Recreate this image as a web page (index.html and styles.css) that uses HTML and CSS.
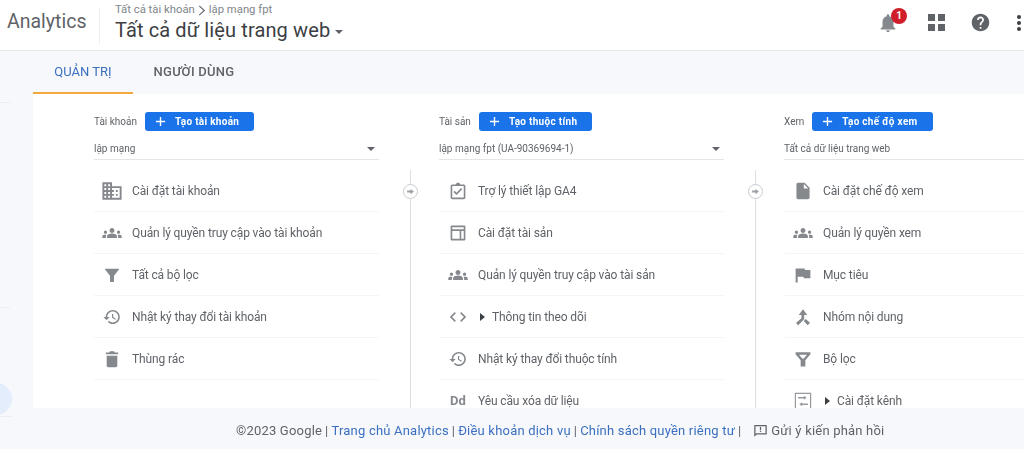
FILE: index.html
```html
<!DOCTYPE html>
<html lang="vi">
<head>
<meta charset="utf-8">
<title>Analytics</title>
<link rel="stylesheet" href="styles.css">
</head>
<body>
<svg class="defs" width="0" height="0" aria-hidden="true">
  <symbol id="i-domain" viewBox="0 0 24 24"><path fill-rule="evenodd" d="M12 7V3H2v18h20V7H12zM6 19H4v-2h2v2zm0-4H4v-2h2v2zm0-4H4V9h2v2zm0-4H4V5h2v2zm4 12H8v-2h2v2zm0-4H8v-2h2v2zm0-4H8V9h2v2zm0-4H8V5h2v2zm10 12h-8v-2h2v-2h-2v-2h2v-2h-2V9h8v10zm-2-8h-2v2h2v-2zm0 4h-2v2h2v-2z"/></symbol>
  <symbol id="i-groups" viewBox="0 0 24 24"><path d="M12 12.750c1.630 0 3.070.39 4.240.9 1.080.48 1.760 1.560 1.760 2.730V18H6v-1.610c0-1.180.68-2.260 1.760-2.730 1.170-.52 2.610-.91 4.240-.91zM4 13c1.100 0 2-.9 2-2s-.9-2-2-2-2 .9-2 2 .9 2 2 2zm1.130 1.100c-.37-.06-.74-.1-1.130-.1-.99 0-1.930.21-2.780.58C.48 14.900 0 15.620 0 16.430V18h4.500v-1.610c0-.83.23-1.610.63-2.290zM20 13c1.100 0 2-.9 2-2s-.9-2-2-2-2 .9-2 2 .9 2 2 2zm4 3.430c0-.81-.48-1.530-1.220-1.850-.85-.37-1.790-.58-2.780-.58-.39 0-.76.04-1.130.1.4.68.63 1.460.63 2.290V18H24v-1.570zM12 6c1.660 0 3 1.340 3 3s-1.340 3-3 3-3-1.340-3-3 1.340-3 3-3z"/></symbol>
  <symbol id="i-filter" viewBox="0 0 24 24"><path d="M3.800 4h16.400c.6 0 .9.7.5 1.200L14.500 13v7.200c0 .5-.4.8-.8.8h-3.400c-.4 0-.8-.3-.8-.8V13L3.300 5.200C2.900 4.700 3.200 4 3.800 4z"/></symbol>
  <symbol id="i-filter-o" viewBox="0 0 24 24"><path fill-rule="evenodd" d="M2.500 3.500h19v2.500L15 13.500v8H9v-8L2.500 6V3.500zm4.500 3 4 5h2l4-5H7z"/></symbol>
  <symbol id="i-history" viewBox="0 0 24 24"><path d="M13 3c-4.970 0-9 4.030-9 9H1l3.890 3.890.07.14L9 12H6c0-3.870 3.130-7 7-7s7 3.130 7 7-3.130 7-7 7c-1.930 0-3.680-.79-4.940-2.060l-1.420 1.420C8.270 19.990 10.510 21 13 21c4.970 0 9-4.030 9-9s-4.030-9-9-9zm-1 5v5l4.280 2.540.72-1.210-3.500-2.080V8H12z"/></symbol>
  <symbol id="i-delete" viewBox="0 0 24 24"><path d="M5.500 8h13v12c0 1.100-.9 2-2 2h-9c-1.100 0-2-.9-2-2V8zM19.500 4H15.500l-1-1.500h-5l-1 1.500H4.500v2.300h15V4z"/></symbol>
  <symbol id="i-check" viewBox="0 0 24 24"><path d="M19 4h-4.200C14.400 2.800 13.300 2 12 2s-2.400.8-2.800 2H5c-1.100 0-2 .9-2 2v14c0 1.100.9 2 2 2h14c1.100 0 2-.9 2-2V6c0-1.100-.9-2-2-2zm0 16H5V6h14v14zm-8.800-3.200-3.700-3.700 1.400-1.400 2.300 2.300 5.600-5.600 1.400 1.400-7 7z"/></symbol>
  <symbol id="i-panel" viewBox="0 0 24 24"><path fill-rule="evenodd" d="M4 3h16c.6 0 1 .4 1 1v16c0 .6-.4 1-1 1H4c-.6 0-1-.4-1-1V4c0-.6.4-1 1-1zm1 2v2.500h14V5H5zm0 4.500V19h9V9.500H5zm11 0V19h3V9.500h-3z"/></symbol>
  <symbol id="i-code" viewBox="0 0 24 24"><path d="M9.400 16.600 4.800 12l4.600-4.600L8 6l-6 6 6 6 1.400-1.400zm5.200 0 4.600-4.600-4.600-4.600L16 6l6 6-6 6-1.400-1.400z"/></symbol>
  <symbol id="i-file" viewBox="0 0 24 24"><path d="M6 2c-1.100 0-1.990.9-1.990 2L4 20c0 1.100.89 2 1.990 2H18c1.100 0 2-.9 2-2V8l-6-6H6zm7 7V3.500L18.500 9H13z"/></symbol>
  <symbol id="i-flag" viewBox="0 0 24 24"><path d="M14.400 6 14 4H3v17h2.500v-7h7.100l.4 2h8V6z"/></symbol>
  <symbol id="i-merge" viewBox="0 0 24 24"><path d="M18 22.500 21 19.500 15.500 14.500 13 17.200 18 22.500zM6.500 9.500h3.500v4L3 19.800 5.800 22.500 13.500 15V9.500H17.500L12 2 6.500 9.500z"/></symbol>
  <symbol id="i-tune" viewBox="0 0 24 24"><path fill-rule="evenodd" d="M2.500 2h19c.3 0 .5.2.5.5v19c0 .3-.2.5-.5.5h-19c-.3 0-.5-.2-.5-.5v-19c0-.3.2-.5.5-.5zM3.500 3.500v17h17v-17h-17zM6 7h7V5.500L16.500 8 13 10.500V9H6V7zm12 8h-7v-1.500L7.500 16l3.500 2.500V17h7v-2z"/></symbol>
  <symbol id="i-plus" viewBox="0 0 24 24"><path d="M10.500 2h3v8.500H22v3h-8.500V22h-3v-8.500H2v-3h8.500z"/></symbol>
  <symbol id="i-arrow" viewBox="0 0 24 24"><path d="M12 5v4.500H3v5h9V19l9-7z"/></symbol>
  <symbol id="i-bell" viewBox="0 0 24 24"><path d="M12 22c1.100 0 2-.9 2-2h-4c0 1.100.89 2 2 2zm6-6v-5c0-3.070-1.640-5.640-4.500-6.320V4c0-.83-.67-1.500-1.500-1.500s-1.500.67-1.500 1.500v.68C7.630 5.360 6 7.920 6 11v5l-2 2v1h16v-1l-2-2z"/></symbol>
  <symbol id="i-help" viewBox="0 0 24 24"><path d="M12 2C6.480 2 2 6.480 2 12s4.480 10 10 10 10-4.480 10-10S17.520 2 12 2zm1 17h-2v-2h2v2zm2.070-7.750-.9.92C13.450 12.900 13 13.500 13 15h-2v-.5c0-1.100.45-2.100 1.170-2.830l1.240-1.260c.37-.36.59-.86.59-1.410 0-1.100-.9-2-2-2s-2 .9-2 2H8c0-2.210 1.790-4 4-4s4 1.790 4 4c0 .88-.36 1.680-.93 2.250z"/></symbol>
  <symbol id="i-feedback" viewBox="0 0 24 24"><path d="M21 3H3c-.6 0-1 .4-1 1v18l4-3.500h15c.6 0 1-.4 1-1V4c0-.6-.4-1-1-1zm-1 13.500H5.300L4 17.700V5h16v11.500zM11 12.500h2v2h-2v-2zm0-6h2v4.500h-2V6.500z"/></symbol>
</svg>

<header class="topbar">
  <div class="brand">Analytics</div>
  <div class="crumbs">
    <div class="crumb-line">Tất cả tài khoản<svg class="crumb-sep" viewBox="0 0 8 12"><path d="M1 1l5.500 5L1 11"/></svg>lập mạng fpt</div>
    <div class="view-title">Tất cả dữ liệu trang web<span class="title-caret"></span></div>
  </div>
  <div class="top-actions">
    <span class="bell">
      <svg class="top-icon bell-icon"><use href="#i-bell"/></svg>
      <span class="badge">1</span>
    </span>
    <span class="apps"><i></i><i></i><i></i><i></i></span>
    <svg class="top-icon help-icon"><use href="#i-help"/></svg>
    <span class="more"><i></i><i></i><i></i></span>
  </div>
</header>

<div class="shell">
  <aside class="rail">
    <div class="rail-a"></div>
    <div class="rail-b"></div>
    <div class="rail-c"><span class="rail-dot"></span></div>
  </aside>
  <div class="workspace">
    <nav class="tabs">
      <a class="tab tab-active">QUẢN TRỊ</a>
      <a class="tab">NGƯỜI DÙNG</a>
    </nav>
    <main class="panel">
      <section class="col">
        <div class="col-head"><span class="col-label">Tài khoản</span><button class="create"><svg class="plus"><use href="#i-plus"/></svg>Tạo tài khoản</button></div>
        <div class="picker">lập mạng<span class="picker-caret"></span></div>
        <ul class="list">
          <li class="row"><svg class="ico ico-lg"><use href="#i-domain"/></svg>Cài đặt tài khoản</li>
          <li class="row"><svg class="ico ico-md"><use href="#i-groups"/></svg>Quản lý quyền truy cập vào tài khoản</li>
          <li class="row"><svg class="ico ico-sm"><use href="#i-filter"/></svg>Tất cả bộ lọc</li>
          <li class="row"><svg class="ico ico-sm"><use href="#i-history"/></svg>Nhật ký thay đổi tài khoản</li>
          <li class="row"><svg class="ico ico-md"><use href="#i-delete"/></svg>Thùng rác</li>
        </ul>
      </section>
      <section class="col">
        <div class="col-head"><span class="col-label">Tài sản</span><button class="create"><svg class="plus"><use href="#i-plus"/></svg>Tạo thuộc tính</button></div>
        <div class="picker">lập mạng fpt (UA-90369694-1)<span class="picker-caret"></span></div>
        <ul class="list list-linked">
          <li class="link-dot"><svg class="link-arrow"><use href="#i-arrow"/></svg></li>
          <li class="row"><svg class="ico ico-md"><use href="#i-check"/></svg>Trợ lý thiết lập GA4</li>
          <li class="row"><svg class="ico ico-md"><use href="#i-panel"/></svg>Cài đặt tài sản</li>
          <li class="row"><svg class="ico ico-md"><use href="#i-groups"/></svg>Quản lý quyền truy cập vào tài sản</li>
          <li class="row"><svg class="ico ico-md"><use href="#i-code"/></svg><span class="expand"></span>Thông tin theo dõi</li>
          <li class="row"><svg class="ico ico-sm"><use href="#i-history"/></svg>Nhật ký thay đổi thuộc tính</li>
          <li class="row"><span class="ico ico-text">Dd</span>Yêu cầu xóa dữ liệu</li>
        </ul>
      </section>
      <section class="col">
        <div class="col-head"><span class="col-label">Xem</span><button class="create"><svg class="plus"><use href="#i-plus"/></svg>Tạo chế độ xem</button></div>
        <div class="picker">Tất cả dữ liệu trang web<span class="picker-caret"></span></div>
        <ul class="list list-linked">
          <li class="link-dot"><svg class="link-arrow"><use href="#i-arrow"/></svg></li>
          <li class="row"><svg class="ico ico-md"><use href="#i-file"/></svg>Cài đặt chế độ xem</li>
          <li class="row"><svg class="ico ico-md"><use href="#i-groups"/></svg>Quản lý quyền xem</li>
          <li class="row"><svg class="ico ico-md"><use href="#i-flag"/></svg>Mục tiêu</li>
          <li class="row"><svg class="ico ico-sm"><use href="#i-merge"/></svg>Nhóm nội dung</li>
          <li class="row"><svg class="ico ico-sm"><use href="#i-filter-o"/></svg>Bộ lọc</li>
          <li class="row"><svg class="ico ico-md ico-thin"><use href="#i-tune"/></svg><span class="expand"></span>Cài đặt kênh</li>
        </ul>
      </section>
    </main>
    <footer class="foot">
      <span>©2023 Google</span><span class="bar">|</span><a class="foot-link">Trang chủ Analytics</a><span class="bar">|</span><a class="foot-link">Điều khoản dịch vụ</a><span class="bar">|</span><a class="foot-link">Chính sách quyền riêng tư</a><span class="bar">|</span>
      <svg class="feedback-icon"><use href="#i-feedback"/></svg><span class="feedback">Gửi ý kiến phản hồi</span>
    </footer>
  </div>
</div>
</body>
</html>
```
FILE: styles.css
```css
* { box-sizing: border-box; }
html, body { margin: 0; height: 100%; overflow: hidden; }
body {
  width: 1024px; height: 449px;
  display: flex; flex-direction: column;
  font-family: Roboto, "Liberation Sans", sans-serif;
  background: #f6f8fb; color: #5f6368;
  filter: blur(.35px);
}
.defs { position: absolute; }

.topbar {
  flex: 0 0 51px; display: flex; align-items: flex-start;
  background: #fff; border-bottom: 1px solid #e6e8eb;
}
.brand {
  width: 100px; height: 36px; margin-top: 8px; padding: 1px 0 0 7px;
  border-right: 1px solid #eceef0;
  font-size: 19.5px; line-height: 26px; color: #5f6368;
}
.crumbs { margin-left: 15px; }
.crumb-line { display: flex; align-items: center; margin-top: 3px; font-size: 11.3px; line-height: 14px; color: #80868b; }
.crumb-sep { width: 8px; height: 11px; margin: 0 3px; fill: none; stroke: #5f6368; stroke-width: 1.2; }
.view-title { font-size: 20px; line-height: 26px; color: #3c4043; letter-spacing: .12px; }
.title-caret {
  display: inline-block; margin-left: 5px; vertical-align: 3px;
  border: 4px solid transparent; border-top: 4px solid #5f6368; border-bottom: 0;
}
.top-actions { margin-left: auto; height: 45px; display: flex; align-items: center; }
.bell { position: relative; width: 22px; height: 22px; }
.top-icon { display: block; fill: #5f6368; }
.bell-icon { width: 22px; height: 22px; fill: #85898e; }
.badge {
  position: absolute; left: 14px; top: -4px; width: 16px; height: 16px; border-radius: 50%;
  background: #d01f2a; color: #fff; font-size: 10px; font-weight: 700; line-height: 16px; text-align: center;
}
.apps {
  margin-left: 29px; width: 17px; height: 17px;
  display: grid; grid-template-columns: 7px 7px; gap: 3px;
}
.apps i { background: #5f6368; }
.help-icon { margin-left: 25px; width: 21px; height: 21px; }
.more { margin: 0 2px 0 26px; width: 5px; display: flex; flex-direction: column; gap: 2px; }
.more i { width: 4px; height: 4px; border-radius: 50%; background: #3c4043; }

.shell { flex: 1; min-height: 0; display: flex; }
.rail { flex: 0 0 33px; overflow: hidden; }
.rail-a, .rail-b, .rail-c { width: 10px; border-bottom: 1px solid #eceef1; }
.rail-a { height: 52px; }
.rail-b { height: 205px; }
.rail-c { height: 109px; width: 12px; position: relative; overflow: hidden; }
.rail-dot {
  position: absolute; right: 0; bottom: 1px; width: 32px; height: 32px; border-radius: 50%;
  background: #e3edfc;
}
.workspace { flex: 1; min-width: 0; display: flex; flex-direction: column; }

.tabs { flex: 0 0 43px; display: flex; }
.tab {
  width: 100px; height: 43px; text-align: center;
  font-size: 13px; line-height: 41px; font-weight: 500; color: #5f6368;
  white-space: nowrap;
}
.tab + .tab { width: 122px; letter-spacing: .25px; }
.tab-active { font-weight: 400; color: #3b6fc0; border-bottom: 2px solid #f4a93b; }

.panel {
  flex: 1; min-height: 0; overflow: hidden; background: #fff;
  display: flex; gap: 60px; padding: 18px 0 0 61px;
}
.col { flex: 0 0 285px; min-width: 0; }
.col-head { height: 19px; display: flex; align-items: center; }
.col-label { margin-right: 8px; font-size: 10px; color: #5f6368; }
.create {
  height: 19px; padding: 0 15px 0 10px; border: 0; border-radius: 3px;
  display: flex; align-items: center;
  background: #1a73e8; color: #fff;
  font: 700 10px/19px Roboto, "Liberation Sans", sans-serif; letter-spacing: .3px;
}
.plus { width: 11px; height: 11px; margin-right: 9px; fill: #fff; }
.picker {
  height: 29px; padding-top: 11px;
  display: flex; justify-content: space-between;
  border-bottom: 1px solid #e3e5e8;
  font-size: 10px; line-height: 14px; color: #5f6368;
}
.picker-caret {
  margin: 5px 4px 0 0; width: 0; height: 0;
  border: 4px solid transparent; border-top: 4px solid #5f6368; border-bottom: 0;
}

.list { position: relative; list-style: none; margin: 10px 0 0; padding: 0; }
.list-linked { margin-left: -29px; padding-left: 29px; border-left: 1px solid #dcdee1; height: 300px; }
.link-dot {
  position: absolute; left: -8px; top: 14px; width: 15px; height: 15px; border-radius: 50%;
  background: #fff; border: 1px solid #c9cccf;
  display: flex; align-items: center; justify-content: center;
}
.link-arrow { width: 9px; height: 9px; fill: #9aa0a6; }
.row {
  height: 42px; padding: 1px 0 0 6px; display: flex; align-items: center;
  border-bottom: 1px solid #f4f5f6;
  font-size: 12px; letter-spacing: -.12px; color: #5f6368;
}
.ico { flex: 0 0 24px; width: 24px; height: 24px; margin-right: 8px; fill: #85888c; }
.ico-lg { transform: scale(.96); }
.ico-md { transform: scale(.82); }
.ico-sm { transform: scale(.78); }
.ico-thin { fill: #96999d; }
.ico-text { font-size: 13px; font-weight: 700; line-height: 24px; text-align: center; letter-spacing: 0; color: #85888c; }
.expand {
  width: 0; height: 0; margin: 0 7px 0 2px;
  border: 4px solid transparent; border-left: 5px solid #3c4043; border-right: 0;
}

.foot {
  flex: 0 0 41px; display: flex; align-items: center; padding: 3px 0 0 203px;
  font-size: 13px; color: #5f6368; white-space: nowrap; letter-spacing: .2px;
}
.bar { margin: 0 3px; }
.foot-link { color: #3b6fc0; }
.feedback-icon { width: 15px; height: 15px; margin: 1px 3px 0 9px; fill: #5f6368; }
.feedback { color: #5f6368; }
```
